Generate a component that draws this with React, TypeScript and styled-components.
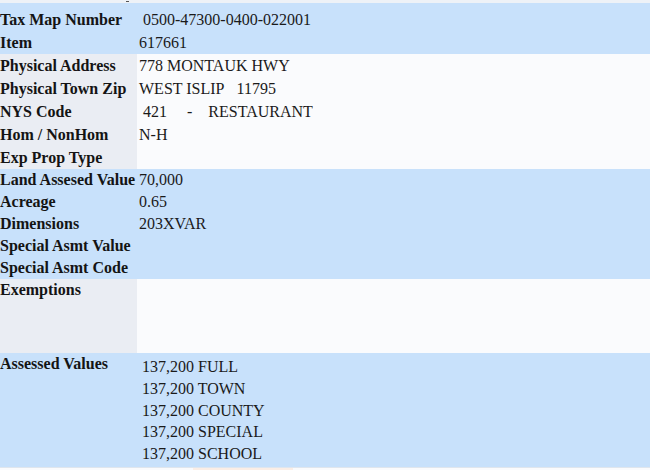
import styled, { createGlobalStyle } from 'styled-components';

const GlobalStyle = createGlobalStyle`
  html, body {
    margin: 0;
    padding: 0;
    background: #fafbfd;
  }
  body {
    font-family: "Liberation Serif", "Times New Roman", serif;
    color: #111;
  }
`;

type Tone = 'blue' | 'plain';

interface Field {
  label: string
  value?: string
  lines?: string[]
}

interface Section {
  tone: Tone
  rowHeight: number
  padTop?: number
  minHeight?: number
  fields: Field[]
}

const sp = (n: number) => '\u00a0'.repeat(n);

const sections: Section[] = [
  {
    tone: 'blue',
    rowHeight: 23,
    padTop: 5,
    fields: [
      { label: 'Tax Map Number', value: sp(1) + '0500-47300-0400-022001' },
      { label: 'Item', value: '617661' },
    ],
  },
  {
    tone: 'plain',
    rowHeight: 23,
    fields: [
      { label: 'Physical Address', value: '778 MONTAUK HWY' },
      { label: 'Physical Town Zip', value: 'WEST ISLIP' + sp(3) + '11795' },
      { label: 'NYS Code', value: sp(1) + '421' + sp(5) + '-' + sp(4) + 'RESTAURANT' },
      { label: 'Hom / NonHom', value: 'N-H' },
      { label: 'Exp Prop Type', value: '' },
    ],
  },
  {
    tone: 'blue',
    rowHeight: 22,
    fields: [
      { label: 'Land Assesed Value', value: '70,000' },
      { label: 'Acreage', value: '0.65' },
      { label: 'Dimensions', value: '203XVAR' },
      { label: 'Special Asmt Value', value: '' },
      { label: 'Special Asmt Code', value: '' },
    ],
  },
  {
    tone: 'plain',
    rowHeight: 22,
    minHeight: 74,
    fields: [{ label: 'Exemptions', value: '' }],
  },
  {
    tone: 'blue',
    rowHeight: 22,
    minHeight: 114,
    fields: [
      {
        label: 'Assessed Values',
        lines: [
          '137,200 FULL',
          '137,200 TOWN',
          '137,200 COUNTY',
          '137,200 SPECIAL',
          '137,200 SCHOOL',
        ],
      },
    ],
  },
];

const Page = styled.div`
  width: 650px;
  height: 470px;
  overflow: hidden;
  display: flex;
  flex-direction: column;
`;

const TopEdge = styled.div`
  height: 3px;
  background: #eef2f7;
  position: relative;

  &::after {
    content: '';
    position: absolute;
    left: 126px;
    top: 1px;
    width: 3px;
    height: 1px;
    background: #555;
  }
`;

const Band = styled.div<{ $tone: Tone; $padTop: number; $minHeight: number }>`
  display: grid;
  grid-template-columns: 137px 1fr;
  background: ${p => (p.$tone === 'blue' ? '#c8e1fb' : '#fafbfd')};
  min-height: ${p => p.$minHeight}px;
  box-sizing: border-box;
  padding-top: ${p => p.$padTop}px;
`;

const LabelCol = styled.div<{ $tone: Tone; $padTop: number }>`
  grid-column: 1;
  display: flex;
  flex-direction: column;
  margin-top: -${p => p.$padTop}px;
  padding-top: ${p => p.$padTop}px;
  background: ${p => (p.$tone === 'blue' ? 'transparent' : '#eaedf3')};
`;

const ValueCol = styled.div`
  grid-column: 2;
  display: flex;
  flex-direction: column;
`;

const Label = styled.div<{ $h: number }>`
  height: ${p => p.$h}px;
  line-height: ${p => p.$h}px;
  font-size: 16px;
  font-weight: bold;
  white-space: nowrap;
  color: #141414;
`;

const Value = styled.div<{ $h: number }>`
  height: ${p => p.$h}px;
  line-height: ${p => p.$h}px;
  font-size: 16px;
  padding-left: 2px;
  white-space: nowrap;
  color: #1a1a1a;
`;

const Lines = styled.div`
  padding-top: 3px;
  padding-left: 5px;
  display: flex;
  flex-direction: column;
`;

const Line = styled.div`
  height: 21.8px;
  line-height: 21.8px;
  font-size: 16px;
  white-space: nowrap;
  color: #1a1a1a;
`;

const BottomEdge = styled.div`
  flex: 1;
  background: #fafbfd;
  display: flex;
  border-top: 1px solid #dfe6ee;
`;

const Tab = styled.div<{ $w: number; $bg: string }>`
  width: ${p => p.$w}px;
  background: ${p => p.$bg};
`;

export default function App() {
  return (
    <Page>
      <GlobalStyle />
      <TopEdge />
      {sections.map((s, i) => (
        <Band key={i} $tone={s.tone} $padTop={s.padTop ?? 0} $minHeight={s.minHeight ?? 0}>
          <LabelCol $tone={s.tone} $padTop={s.padTop ?? 0}>
            {s.fields.map(f => (
              <Label key={f.label} $h={s.rowHeight}>{f.label}</Label>
            ))}
          </LabelCol>
          <ValueCol>
            {s.fields.map(f =>
              f.lines ? (
                <Lines key={f.label}>
                  {f.lines.map(l => <Line key={l}>{l}</Line>)}
                </Lines>
              ) : (
                <Value key={f.label} $h={s.rowHeight}>{f.value}</Value>
              )
            )}
          </ValueCol>
        </Band>
      ))}
      <BottomEdge>
        <Tab $w={193} $bg="#fafbfd" />
        <Tab $w={100} $bg="#fbeee6" />
      </BottomEdge>
    </Page>
  );
}
